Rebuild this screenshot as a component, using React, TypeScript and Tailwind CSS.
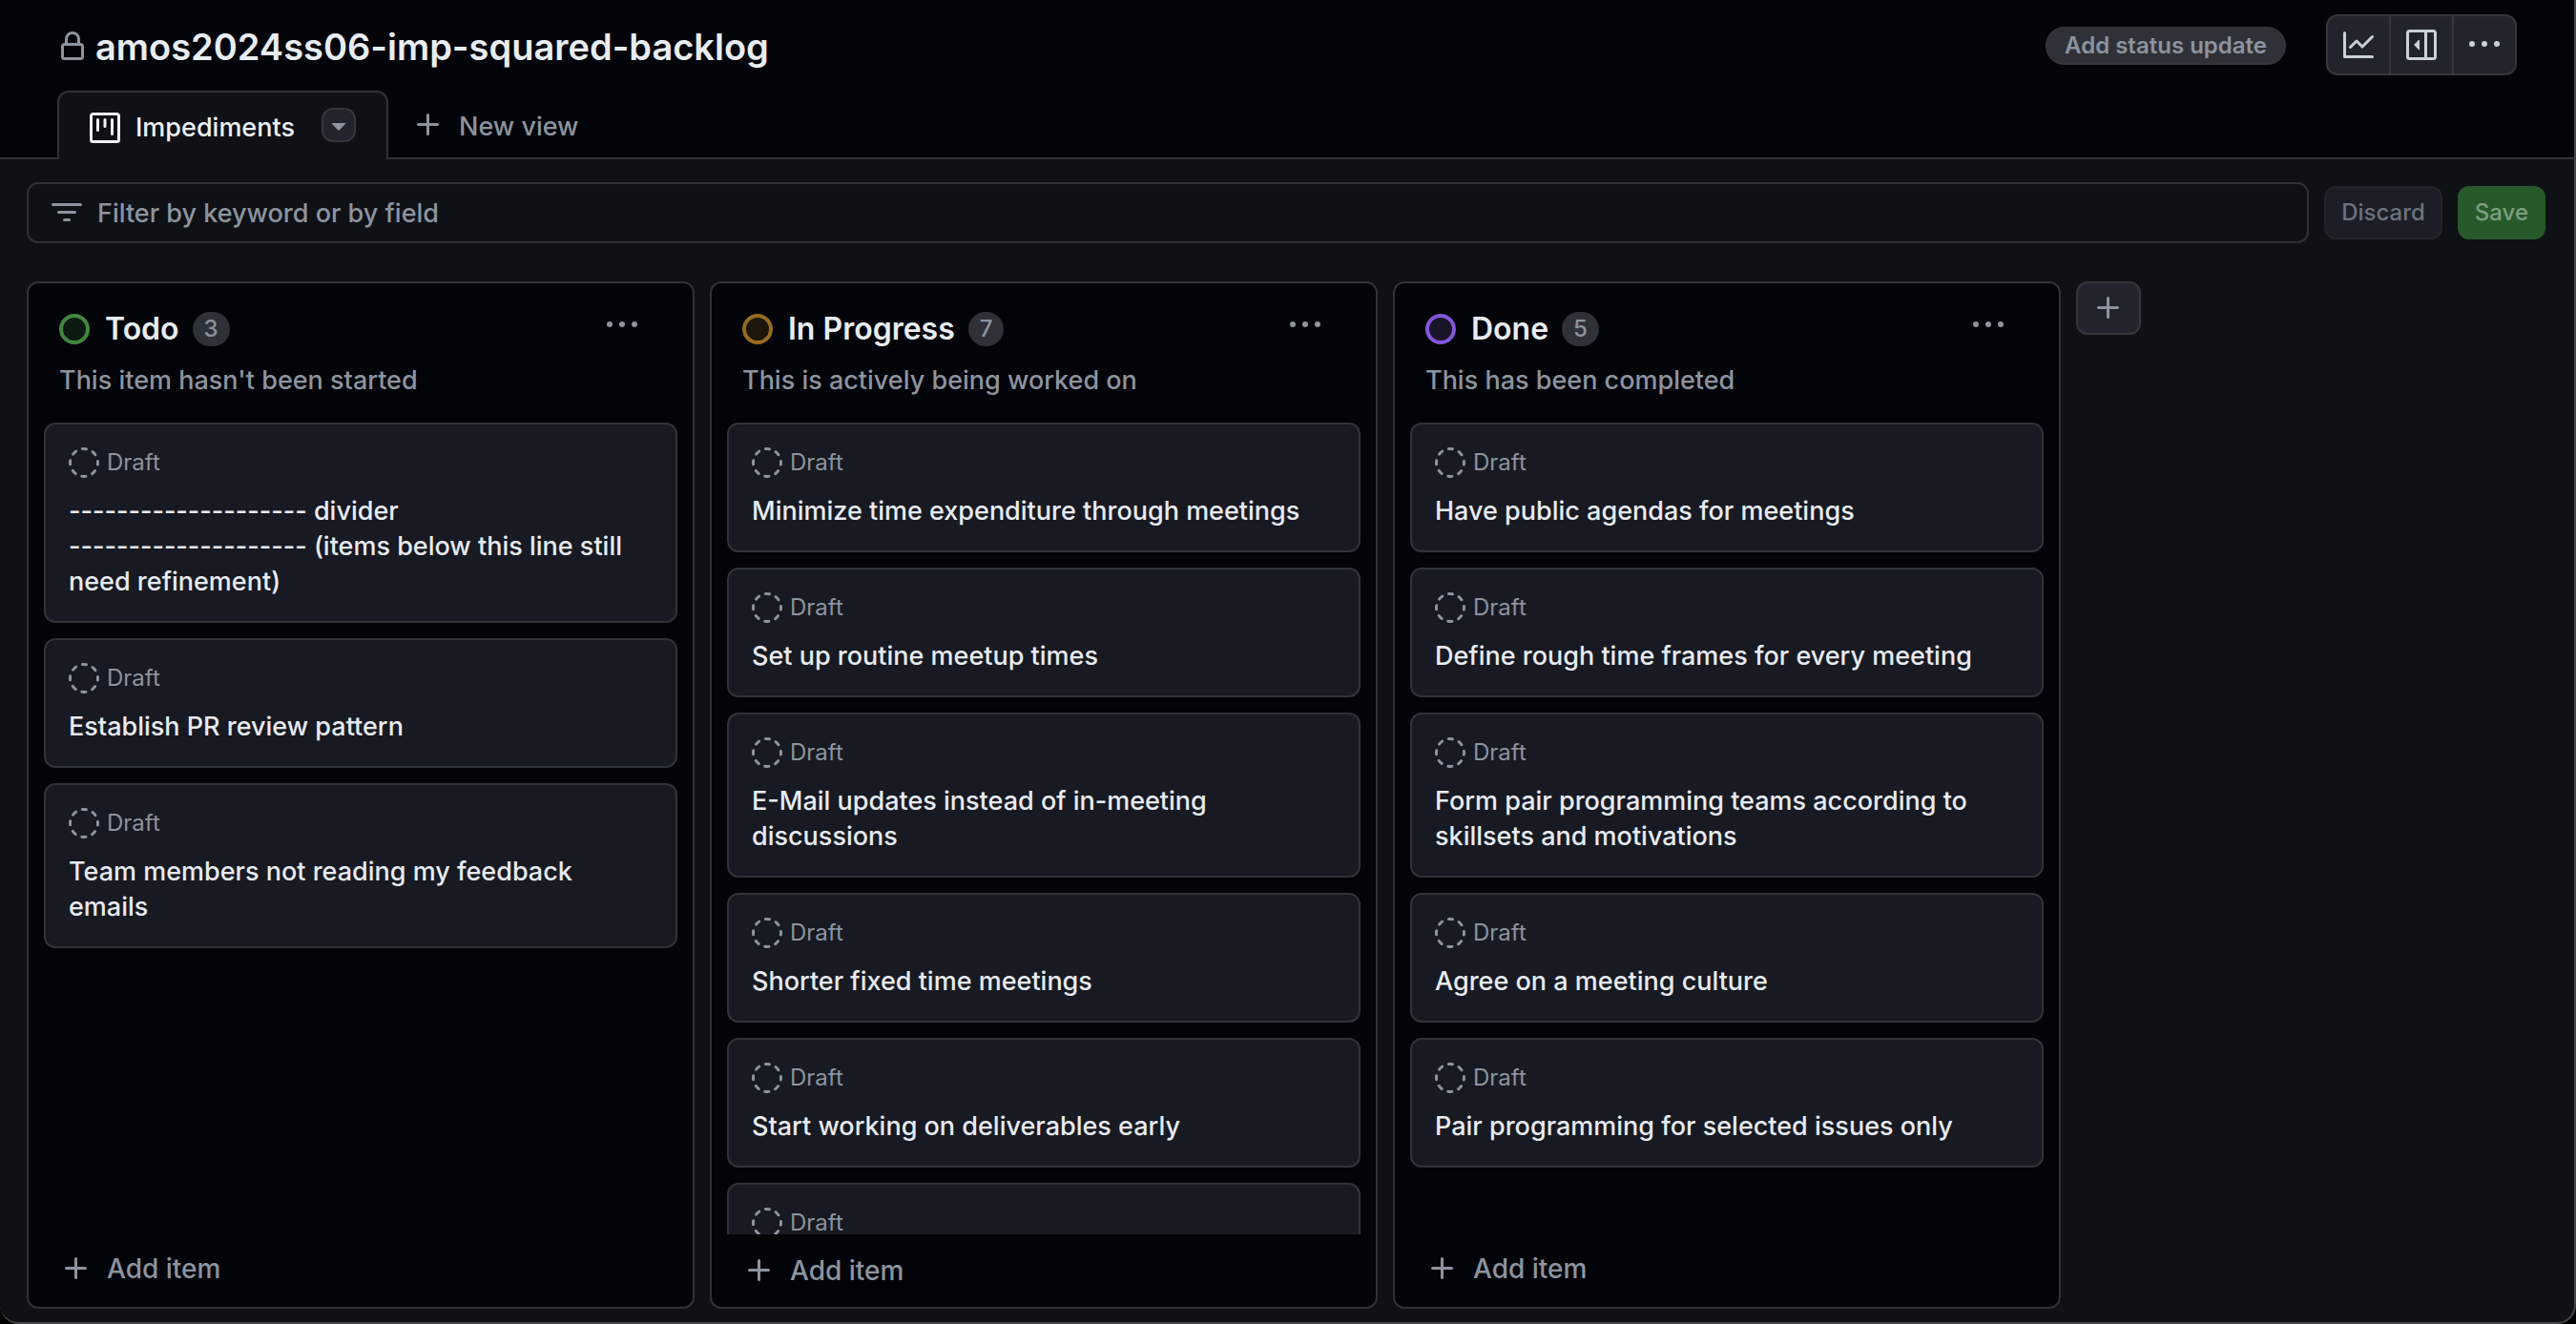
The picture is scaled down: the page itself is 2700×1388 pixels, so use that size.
const PATHS = {
  lock: "M4 4a4 4 0 0 1 8 0v2h.25c.966 0 1.75.784 1.75 1.75v5.5A1.75 1.75 0 0 1 12.25 15h-8.5A1.75 1.75 0 0 1 2 13.25v-5.5C2 6.784 2.784 6 3.75 6H4Zm8.25 3.5h-8.5a.25.25 0 0 0-.25.25v5.5c0 .138.112.25.25.25h8.5a.25.25 0 0 0 .25-.25v-5.5a.25.25 0 0 0-.25-.25ZM10.5 6V4a2.5 2.5 0 1 0-5 0v2Z",
  plus: "M7.75 2a.75.75 0 0 1 .75.75V7h4.25a.75.75 0 0 1 0 1.5H8.5v4.25a.75.75 0 0 1-1.5 0V8.5H2.75a.75.75 0 0 1 0-1.5H7V2.75A.75.75 0 0 1 7.75 2Z",
  filter:
    "M.75 3h14.5a.75.75 0 0 1 0 1.5H.75a.75.75 0 0 1 0-1.5ZM3 7.75A.75.75 0 0 1 3.75 7h8.5a.75.75 0 0 1 0 1.5h-8.5A.75.75 0 0 1 3 7.75Zm3 4a.75.75 0 0 1 .75-.75h2.5a.75.75 0 0 1 0 1.5h-2.5a.75.75 0 0 1-.75-.75Z",
  project:
    "M1.75 0h12.5C15.216 0 16 .784 16 1.75v12.5A1.75 1.75 0 0 1 14.25 16H1.75A1.75 1.75 0 0 1 0 14.25V1.75C0 .784.784 0 1.75 0ZM1.5 1.75v12.5c0 .138.112.25.25.25h12.5a.25.25 0 0 0 .25-.25V1.75a.25.25 0 0 0-.25-.25H1.75a.25.25 0 0 0-.25.25ZM11.75 3a.75.75 0 0 1 .75.75v7.5a.75.75 0 0 1-1.5 0v-7.5a.75.75 0 0 1 .75-.75Zm-8.25.75a.75.75 0 0 1 1.5 0v5.5a.75.75 0 0 1-1.5 0ZM8 3a.75.75 0 0 1 .75.75v3.5a.75.75 0 0 1-1.5 0v-3.5A.75.75 0 0 1 8 3Z",
  graph:
    "M1.5 1.75V13.5h13.75a.75.75 0 0 1 0 1.5H.75a.75.75 0 0 1-.75-.75V1.75a.75.75 0 0 1 1.5 0Zm14.28 2.53-5.25 5.25a.75.75 0 0 1-1.06 0L7 7.06 4.28 9.78a.751.751 0 0 1-1.042-.018.751.751 0 0 1-.018-1.042l3.25-3.25a.75.75 0 0 1 1.06 0L10 7.94l4.72-4.72a.751.751 0 0 1 1.042.018.751.751 0 0 1 .018 1.042Z",
  sidebar:
    "m4.177 7.823 2.396-2.396A.25.25 0 0 1 7 5.604v4.792a.25.25 0 0 1-.427.177L4.177 8.177a.25.25 0 0 1 0-.354ZM0 1.75C0 .784.784 0 1.75 0h12.5C15.216 0 16 .784 16 1.75v12.5A1.75 1.75 0 0 1 14.25 16H1.75A1.75 1.75 0 0 1 0 14.25Zm1.75-.25a.25.25 0 0 0-.25.25v12.5c0 .138.112.25.25.25H9.5v-13Zm12.5 13a.25.25 0 0 0 .25-.25V1.75a.25.25 0 0 0-.25-.25H11v13Z",
  kebab:
    "M8 9a1.5 1.5 0 1 0 0-3 1.5 1.5 0 0 0 0 3ZM1.5 9a1.5 1.5 0 1 0 0-3 1.5 1.5 0 0 0 0 3Zm13 0a1.5 1.5 0 1 0 0-3 1.5 1.5 0 0 0 0 3Z",
  triangle: "m4.427 7.427 3.396 3.396a.25.25 0 0 0 .354 0l3.396-3.396A.25.25 0 0 0 11.396 7H4.604a.25.25 0 0 0-.177.427Z",
};

function Icon({ name }: { name: keyof typeof PATHS }) {
  return (
    <svg viewBox="0 0 16 16" className="size-8 shrink-0" fill="currentColor" fillRule="evenodd" aria-hidden="true">
      <path d={PATHS[name]} />
    </svg>
  );
}

function DraftIcon() {
  return (
    <svg viewBox="0 0 16 16" className="size-8 shrink-0" fill="none" stroke="currentColor" aria-hidden="true">
      <circle cx="8" cy="8" r="7.25" strokeWidth="1.5" strokeLinecap="round" strokeDasharray="2.1 3.594" strokeDashoffset="1.05" />
    </svg>
  );
}

type Column = {
  title: string;
  description: string;
  count: number;
  ring: string;
  cards: string[];
  overflowing?: boolean;
};

const COLUMNS: Column[] = [
  {
    title: "Todo",
    description: "This item hasn't been started",
    count: 3,
    ring: "border-[#43873f] bg-[#0d1a13]",
    cards: [
      "-------------------- divider\n-------------------- (items below this line still need refinement)",
      "Establish PR review pattern",
      "Team members not reading my feedback emails",
    ],
  },
  {
    title: "In Progress",
    description: "This is actively being worked on",
    count: 7,
    ring: "border-[#966a20] bg-[#1c160b]",
    overflowing: true,
    cards: [
      "Minimize time expenditure through meetings",
      "Set up routine meetup times",
      "E-Mail updates instead of in-meeting discussions",
      "Shorter fixed time meetings",
      "Start working on deliverables early",
      "",
    ],
  },
  {
    title: "Done",
    description: "This has been completed",
    count: 5,
    ring: "border-[#8256d8] bg-[#191428]",
    cards: [
      "Have public agendas for meetings",
      "Define rough time frames for every meeting",
      "Form pair programming teams according to skillsets and motivations",
      "Agree on a meeting culture",
      "Pair programming for selected issues only",
    ],
  },
];

function Card({ title }: { title: string }) {
  return (
    <li className="shrink-0 rounded-xl border-2 border-[#2f3439] bg-[#171a22] px-6 pt-6 pb-[23px]">
      <div className="mb-4 flex items-center gap-2 text-2xl/8 text-[#8d949e]">
        <DraftIcon />
        <span>Draft</span>
      </div>
      <h3 className="min-h-[37px] text-[27px]/[37px] font-medium whitespace-pre-line text-[#e8ebf1]">{title}</h3>
    </li>
  );
}

function BoardColumn({ column }: { column: Column }) {
  return (
    <section className="flex w-[700px] shrink-0 flex-col rounded-xl border-2 border-[#2f3338] bg-[#02040a]">
      <header className="px-8 pt-[27px] pb-[22px]">
        <div className="flex h-[42px] items-center">
          <span className={`size-8 shrink-0 rounded-full border-4 ${column.ring}`} />
          <h2 className="ml-4 text-[32px]/[42px] font-semibold text-[#e8edf1]">{column.title}</h2>
          <span className="ml-[14px] flex h-9 min-w-9 items-center justify-center rounded-full bg-[#2e3138] px-3 text-2xl font-medium text-[#8d949e]">
            {column.count}
          </span>
          <button type="button" aria-label={`${column.title} actions`} className="mr-[26px] mb-2 ml-auto text-[#8d949e]">
            <Icon name="kebab" />
          </button>
        </div>
        <p className="mt-[11px] text-[27px]/[44px] font-medium text-[#8d949e]">{column.description}</p>
      </header>
      <ul className="flex min-h-0 flex-1 flex-col gap-4 overflow-hidden px-4">
        {column.cards.map((card, i) => (
          <Card key={i} title={card} />
        ))}
      </ul>
      <button
        type="button"
        className={`flex h-[76px] shrink-0 items-center gap-4 px-[34px] text-[28px] font-medium text-[#8d949e] ${column.overflowing ? "pb-0" : "pb-1"}`}
      >
        <Icon name="plus" />
        Add item
      </button>
    </section>
  );
}

export default function App() {
  return (
    <div className="h-screen bg-black font-['Inter',sans-serif]">
      <div className="flex h-full flex-col overflow-hidden rounded-b-[20px] border-r-2 border-b-2 border-[#43454b] bg-[#0e1116]">
        <header className="shrink-0 border-b-2 border-[#2f3338] bg-[#02040a] px-[60px] pt-[15px]">
          <div className="flex h-16 items-center">
            <div className="flex items-center gap-2 pt-1 text-[#8d949e]">
              <Icon name="lock" />
              <h1 className="text-[38px]/[48px] font-semibold text-[#e8edf1]">amos2024ss06-imp-squared-backlog</h1>
            </div>
            <button type="button" className="mt-0.5 ml-auto h-10 rounded-full border-2 border-[#32363b] bg-[#2e3138] px-[18px] text-2xl/8 font-semibold text-[#8d949e]">
              Add status update
            </button>
            <div className="ml-[42px] flex h-16 divide-x-2 divide-[#34373c] overflow-hidden rounded-xl border-2 border-[#34373c] bg-[#21242c] text-[#c9d1d9]">
              <button type="button" aria-label="Insights" className="px-4">
                <Icon name="graph" />
              </button>
              <button type="button" aria-label="Project details" className="px-4">
                <Icon name="sidebar" />
              </button>
              <button type="button" aria-label="More options" className="px-4">
                <Icon name="kebab" />
              </button>
            </div>
          </div>
          <nav className="mt-4 -mb-0.5 flex h-[72px]">
            <div className="flex items-center rounded-t-xl border-2 border-b-0 border-[#2f3338] bg-[#0e1116] px-8 text-[#eef1f6]">
              <a href="#impediments" className="flex items-center gap-4 pt-1 text-[27px] font-medium">
                <Icon name="project" />
                Impediments
              </a>
              <button
                type="button"
                aria-label="View options"
                className="mb-0.5 ml-7 flex size-9 items-center justify-center rounded-xl border-2 border-[#34373c] bg-[#21242c] text-[#8d949e]"
              >
                <Icon name="triangle" />
              </button>
            </div>
            <button type="button" className="ml-[26px] flex items-center gap-4 text-[27px] font-medium text-[#8d949e]">
              <Icon name="plus" />
              <span className="pt-1">New view</span>
            </button>
          </nav>
        </header>

        <main className="flex min-h-0 flex-1 flex-col gap-10 pt-6 pr-[30px] pb-[14px] pl-7">
          <div className="flex shrink-0 items-center gap-4">
            <label className="flex h-16 flex-1 items-center gap-4 rounded-xl border-2 border-[#2f3338] px-6 text-[#8d949e]">
              <Icon name="filter" />
              <input
                type="text"
                aria-label="Filter by keyword or by field"
                placeholder="Filter by keyword or by field"
                className="min-w-0 flex-1 bg-transparent pt-0.5 text-[27px] font-medium outline-none placeholder:text-[#8d949e]"
              />
            </label>
            <button type="button" className="h-14 rounded-xl border-2 border-[#21242a] bg-[#1b1e26] px-4 text-2xl font-medium text-[#6c737d]">
              Discard
            </button>
            <button type="button" className="h-14 rounded-xl bg-[#28592a] px-[18px] text-2xl font-medium text-[#7d9f81]">
              Save
            </button>
          </div>
          <div className="flex min-h-0 flex-1 gap-4">
            {COLUMNS.map((column) => (
              <BoardColumn key={column.title} column={column} />
            ))}
            <button
              type="button"
              aria-label="Add a new column"
              className="flex h-14 w-[68px] shrink-0 items-center justify-center rounded-xl border-2 border-[#34373c] bg-[#21242c] text-[#8d949e]"
            >
              <Icon name="plus" />
            </button>
          </div>
        </main>
      </div>
    </div>
  );
}
